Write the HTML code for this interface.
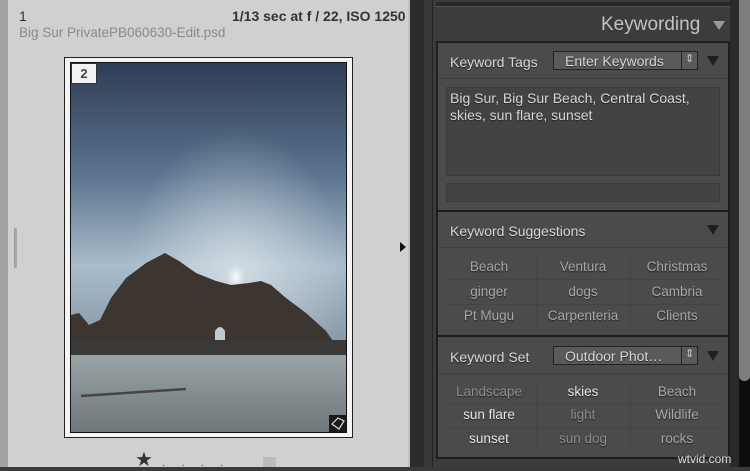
<!DOCTYPE html>
<html><head><meta charset="utf-8"><style>
*{margin:0;padding:0;box-sizing:border-box}
body{width:750px;height:467px;overflow:hidden;position:relative;background:#3a3a3a;font-family:"Liberation Sans",sans-serif}
.a{position:absolute}
.t{color:#d8d8d8;font-size:14px;text-shadow:0 1px 1px #222}
.g{color:#a8a8a8}
.cell{position:absolute;width:94px;text-align:center;font-size:13.5px;text-shadow:0 1px 1px #222}
</style></head><body>
<div class="a" style="left:0;top:0;width:8px;height:467px;background:#a3a3a3"></div>
<div class="a" style="left:8px;top:0;width:400px;height:467px;background:#d0d0d0"></div>
<div class="a" style="left:14px;top:228px;width:3px;height:40px;background:#aaa;border-left:1px solid #999"></div>
<div class="a" style="left:19px;top:8px;font-size:14px;color:#333">1</div>
<div class="a" style="left:232px;top:8px;font-size:14px;color:#333;font-weight:bold">1/13 sec at f / 22, ISO 1250</div>
<div class="a" style="left:19px;top:25px;font-size:13.5px;color:#8a8a8a">Big Sur PrivatePB060630-Edit.psd</div>
<div class="a" style="left:64px;top:57px;width:289px;height:381px;background:#f4f4f4;border:1px solid #222"></div>
<div class="a" style="left:70px;top:62px;width:277px;height:371px;background:#111"></div>
<svg class="a" style="left:71px;top:63px" width="275" height="369" viewBox="0 0 275 369">
<defs>
<linearGradient id="sky" x1="0" y1="0" x2="0" y2="1"><stop offset="0" stop-color="#2f3d55"/><stop offset="0.3" stop-color="#5a738e"/><stop offset="0.55" stop-color="#a9bccb"/><stop offset="0.75" stop-color="#8899a8"/></linearGradient>
<radialGradient id="sun" cx="0.6" cy="0.58" r="0.4"><stop offset="0" stop-color="#fff" stop-opacity="0.95"/><stop offset="0.08" stop-color="#e8eef2" stop-opacity="0.6"/><stop offset="1" stop-color="#dfe8ee" stop-opacity="0"/></radialGradient>
<linearGradient id="sand" x1="0" y1="0" x2="0" y2="1"><stop offset="0" stop-color="#9aa3a6"/><stop offset="1" stop-color="#6e7779"/></linearGradient>
</defs>
<rect width="275" height="369" fill="url(#sky)"/>
<rect width="275" height="369" fill="url(#sun)"/>
<path d="M0 280 L0 252 L8 250 L18 262 L29 257 L40 235 L55 215 L75 200 L94 190 L108 198 L125 210 L145 218 L160 222 L178 220 L190 218 L200 222 L215 235 L235 250 L255 268 L262 278 L275 282 L275 290 L0 290 Z" fill="#3d3530"/>
<path d="M144 280 L144 268 Q149 260 154 268 L154 280 Z" fill="#bfcbd0"/>
<rect x="0" y="277" width="275" height="17" fill="#3a3937"/>
<rect x="0" y="292" width="275" height="77" fill="url(#sand)"/>
<path d="M10 333 L115 326" stroke="#4a443e" stroke-width="2.5"/>
<rect x="258" y="352" width="17" height="17" fill="#1a1a1a"/>
<path d="M261 361 L267 355 L273 358 L268 366 Z" fill="none" stroke="#ddd" stroke-width="1.2"/>
</svg>
<div class="a" style="left:71px;top:63px;width:26px;height:21px;background:#f2f2f2;border:1px solid #333;font-size:13px;font-weight:bold;color:#444;text-align:center;line-height:19px">2</div>
<div class="a" style="left:135px;top:450px;font-size:20px;color:#333;line-height:20px">★</div>
<div class="a" style="left:162px;top:460px;font-size:10px;color:#333;letter-spacing:16px">····</div>
<div class="a" style="left:263px;top:457px;width:13px;height:10px;background:#bcbcbc"></div>
<div class="a" style="left:408px;top:0;width:2px;height:467px;background:#c0c0c0"></div>
<div class="a" style="left:410px;top:0;width:14px;height:467px;background:#2c2c2c"></div>
<div class="a" style="left:400px;top:242px;width:0;height:0;border-top:5px solid transparent;border-bottom:5px solid transparent;border-left:6px solid #111"></div>
<div class="a" style="left:424px;top:0;width:8px;height:467px;background:#383838"></div>
<div class="a" style="left:432px;top:0;width:298px;height:467px;background:#3c3c3c;border-left:1px solid #222"></div>
<div class="a" style="left:436px;top:2px;width:294px;height:5px;background:#262626;border-bottom:1px solid #555"></div>
<div class="a" style="left:601px;top:14px;font-size:19px;color:#c2c2c2">Keywording</div>
<div class="a" style="left:713px;top:21px;width:0;height:0;border-left:6px solid transparent;border-right:6px solid transparent;border-top:9px solid #9a9a9a"></div>
<div class="a" style="left:436px;top:41px;width:294px;height:418px;background:#4b4b4b;border:2px solid #1e1e1e"></div>
<div class="a t" style="left:450px;top:54px">Keyword Tags</div>
<div class="a" style="left:553px;top:51px;width:145px;height:19px;background:#5a5a5a;border:1px solid #222"></div>
<div class="a t" style="left:565px;top:53px">Enter Keywords</div>
<div class="a" style="left:681px;top:51px;width:1px;height:19px;background:#222"></div>
<div class="a" style="left:685px;top:52px;color:#ccc;font-size:11px">⇕</div>
<div class="a" style="left:707px;top:56px;border-left:6px solid transparent;border-right:6px solid transparent;border-top:10px solid #1f1f1f"></div>
<div class="a" style="left:438px;top:78px;width:290px;height:1px;background:#3e3e3e"></div>
<div class="a" style="left:446px;top:87px;width:274px;height:89px;background:#434343;border:1px solid #3a3a3a"></div>
<div class="a t" style="left:450px;top:90px;line-height:17px">Big Sur, Big Sur Beach, Central Coast,<br>skies, sun flare, sunset</div>
<div class="a" style="left:446px;top:183px;width:274px;height:19px;background:#434343;border:1px solid #3a3a3a"></div>
<div class="a" style="left:438px;top:210px;width:290px;height:2px;background:#1e1e1e"></div>
<div class="a t" style="left:450px;top:223px">Keyword Suggestions</div>
<div class="a" style="left:707px;top:225px;border-left:6px solid transparent;border-right:6px solid transparent;border-top:10px solid #1f1f1f"></div>
<div class="a" style="left:438px;top:247px;width:290px;height:1px;background:#3e3e3e"></div>
<div class="a" style="left:444px;top:279px;width:278px;height:1px;background:#444"></div>
<div class="a" style="left:444px;top:304px;width:278px;height:1px;background:#444"></div>
<div class="a" style="left:536px;top:256px;width:1px;height:72px;background:#444"></div>
<div class="a" style="left:630px;top:256px;width:1px;height:72px;background:#444"></div>
<div class="cell g" style="left:442px;top:259px">Beach</div><div class="cell g" style="left:536px;top:259px">Ventura</div><div class="cell g" style="left:630px;top:259px">Christmas</div>
<div class="cell g" style="left:442px;top:284px">ginger</div><div class="cell g" style="left:536px;top:284px">dogs</div><div class="cell g" style="left:630px;top:284px">Cambria</div>
<div class="cell g" style="left:442px;top:308px">Pt Mugu</div><div class="cell g" style="left:536px;top:308px">Carpenteria</div><div class="cell g" style="left:630px;top:308px">Clients</div>
<div class="a" style="left:438px;top:335px;width:290px;height:2px;background:#1e1e1e"></div>
<div class="a t" style="left:450px;top:349px">Keyword Set</div>
<div class="a" style="left:553px;top:346px;width:145px;height:19px;background:#5a5a5a;border:1px solid #222"></div>
<div class="a t" style="left:565px;top:348px">Outdoor Phot…</div>
<div class="a" style="left:681px;top:346px;width:1px;height:19px;background:#222"></div>
<div class="a" style="left:685px;top:347px;color:#ccc;font-size:11px">⇕</div>
<div class="a" style="left:707px;top:351px;border-left:6px solid transparent;border-right:6px solid transparent;border-top:10px solid #1f1f1f"></div>
<div class="a" style="left:438px;top:373px;width:290px;height:1px;background:#3e3e3e"></div>
<div class="a" style="left:444px;top:403px;width:278px;height:1px;background:#444"></div>
<div class="a" style="left:444px;top:427px;width:278px;height:1px;background:#444"></div>
<div class="a" style="left:536px;top:381px;width:1px;height:70px;background:#444"></div>
<div class="a" style="left:630px;top:381px;width:1px;height:70px;background:#444"></div>
<div class="cell" style="left:442px;top:384px;color:#8e8e8e">Landscape</div><div class="cell" style="left:536px;top:384px;color:#e6e6e6">skies</div><div class="cell g" style="left:630px;top:384px">Beach</div>
<div class="cell" style="left:442px;top:407px;color:#e6e6e6">sun flare</div><div class="cell" style="left:536px;top:407px;color:#8e8e8e">light</div><div class="cell g" style="left:630px;top:407px">Wildlife</div>
<div class="cell" style="left:442px;top:431px;color:#e6e6e6">sunset</div><div class="cell" style="left:536px;top:431px;color:#8e8e8e">sun dog</div><div class="cell g" style="left:630px;top:431px">rocks</div>
<div class="a" style="left:730px;top:0;width:9px;height:467px;background:#2a2a2a"></div>
<div class="a" style="left:739px;top:0;width:11px;height:467px;background:#0e0e0e"></div>
<div class="a" style="left:739px;top:0;width:11px;height:381px;background:#7e7e7e;border-radius:0 0 5px 5px"></div>
<div class="a" style="left:678px;top:452px;font-size:12px;color:#ddd">wtvid.com</div>
</body></html>
